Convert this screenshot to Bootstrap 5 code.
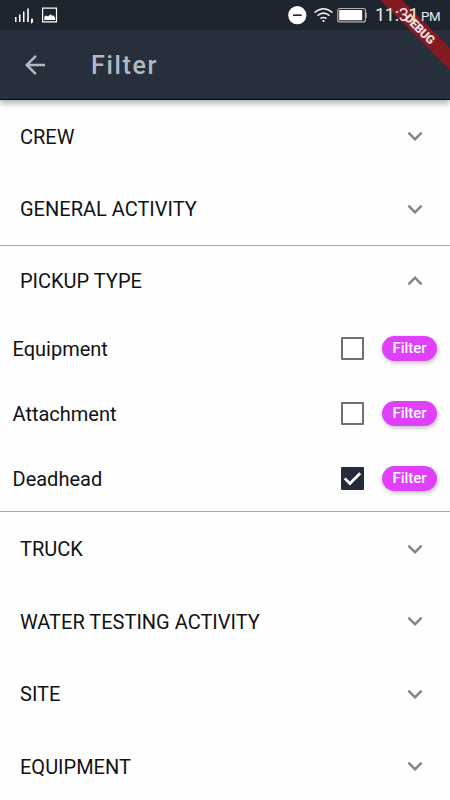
<!DOCTYPE html>
<html lang="en">
<head>
<meta charset="utf-8">
<meta name="viewport" content="width=device-width, initial-scale=1">
<title>Filter</title>
<link href="https://cdn.jsdelivr.net/npm/bootstrap@5.3.0/dist/css/bootstrap.min.css" rel="stylesheet">
<style>
body{font-family:Roboto,"Liberation Sans",sans-serif;background:#fefefe;color:#111214;width:450px;height:800px}
svg{display:block;flex:none}
.status{height:30px;background:#1e252e;color:#fff;padding:0 10px 0 14px}
.clock{z-index:3;width:65px;font-size:18px;line-height:30px;letter-spacing:-.3px;color:#e9eaeb;padding-top:2px}
.clock span{font-size:13.3px;letter-spacing:-.5px}
.appbar{height:70px;background:#262f3b;border-bottom:1px solid #05080b;box-shadow:0 4px 5px rgba(0,0,0,.26);padding-left:20px;color:#b4b8bf}
.title{font-size:25px;font-weight:500;letter-spacing:1.65px;margin-left:41px;line-height:30px;padding-top:3px}
.group-row{height:72.5px;padding:1px 20px 0;font-size:20px;line-height:24px}
.group-row svg{margin-top:-1px}
.open-group{border-top:1px solid #aaa;border-bottom:1px solid #aaa;height:267px;margin-bottom:.5px}
.open-group .group-row{height:70px;padding-top:0}
.option{height:65px;padding:0 13px 0 12.5px;font-size:20px;line-height:24px}
.check-box{appearance:none;width:23px;height:23px;border:2.5px solid #707070;margin:0 18px 0 0;border-radius:1px;background:#fff center/23px 23px no-repeat}
.check-box:checked{border-color:#232d3a;background-color:#232d3a;background-image:url("data:image/svg+xml,%3Csvg xmlns='http://www.w3.org/2000/svg' viewBox='0 0 23 23'%3E%3Cpath d='M3.7 11.4l5.2 5.1L19.2 6.2' fill='none' stroke='white' stroke-width='2.7'/%3E%3C/svg%3E")}
.pill{width:55px;height:25px;padding:0;border:0;background:#e040fb;color:#fff;font-size:15px;font-weight:500;line-height:25px;letter-spacing:0;box-shadow:1px 2px 4px rgba(0,0,0,.25)}
.ribbon{z-index:2}
</style>
<script src="https://cdn.jsdelivr.net/npm/bootstrap@5.3.0/dist/js/bootstrap.bundle.min.js"></script>
</head>
<body class="overflow-hidden position-relative">
<div class="status d-flex align-items-center justify-content-between">
  <svg width="44" height="30" fill="#fff"><path d="M1 17h1.500v5H1zM5 14.500h1.500V22H5zM9 11.500h1.500V22H9zM13.200 8.500h1.600V22h-1.600zM17 18.800h2V22l-1.200 1.600-.8-.2z"/><path fill="none" stroke="#fff" stroke-width="1.200" d="M28.600 8.100h13.900v13.800H28.600z"/><path d="M30.300 20v-3.300l1.800-1.200 2 1 2.200-2.300 1.700 1.500 1.300-.4 1.800 2.200V20z"/></svg>
  <div class="d-flex align-items-center">
    <svg width="88" height="30"><circle cx="10.300" cy="15.200" r="9.100" fill="#fff"/><path d="M6 15.200h8.700" stroke="#1e252e" stroke-width="1.600"/><g fill="none" stroke="#f1f1f1" stroke-width="1.500"><path d="M27.500 12.500q9-7.500 18 0M30.500 15.600q6-5 12 0M33.500 18.600q3-2.400 6 0"/></g><circle cx="36.500" cy="21" r="1.100" fill="#fff"/><rect x="50.800" y="8.500" width="27.600" height="13.400" rx="2" fill="none" stroke="#aeb2b6" stroke-width="1.200"/><rect x="52.200" y="10" width="23" height="10.300" rx=".6" fill="#fff"/><path d="M79.300 12.500v5.500" stroke="#aeb2b6"/></svg>
    <div class="clock d-flex align-items-baseline justify-content-between position-relative text-nowrap">11:31<span>PM</span></div>
  </div>
</div>
<header class="appbar d-flex align-items-center">
  <svg width="30" height="30" viewBox="0 0 24 24" fill="currentColor"><path d="M20 11H7.830l5.590-5.590L12 4l-8 8 8 8 1.410-1.410L7.830 13H20v-2z"/></svg>
  <h1 class="title mb-0">Filter</h1>
</header>
<svg class="ribbon position-absolute top-0 end-0" width="80" height="80"><path d="M10 0h22l48 48v22z" fill="#851b20"/><text transform="translate(50 29) rotate(45)" text-anchor="middle" y="4.300" font-size="12" font-weight="900" fill="#e8e3e4" textLength="37">DEBUG</text></svg>
<main>
  <div class="group-row d-flex align-items-center justify-content-between">CREW<svg width="30" height="30" viewBox="0 0 24 24" fill="#858585"><path d="M16.590 8.590L12 13.170 7.410 8.590 6 10l6 6 6-6z"/></svg></div>
  <div class="group-row d-flex align-items-center justify-content-between">GENERAL ACTIVITY<svg width="30" height="30" viewBox="0 0 24 24" fill="#858585"><path d="M16.590 8.590L12 13.170 7.410 8.590 6 10l6 6 6-6z"/></svg></div>
  <section class="open-group">
    <div class="group-row d-flex align-items-center justify-content-between">PICKUP TYPE<svg width="30" height="30" viewBox="0 0 24 24" fill="#858585"><path d="M12 8l-6 6 1.410 1.410L12 10.830l4.590 4.580L18 14z"/></svg></div>
    <div class="option d-flex align-items-center"><label class="me-auto" for="equipment">Equipment</label><input id="equipment" class="check-box" type="checkbox"><button class="btn pill rounded-pill">Filter</button></div>
    <div class="option d-flex align-items-center"><label class="me-auto" for="attachment">Attachment</label><input id="attachment" class="check-box" type="checkbox"><button class="btn pill rounded-pill">Filter</button></div>
    <div class="option d-flex align-items-center"><label class="me-auto" for="deadhead">Deadhead</label><input id="deadhead" class="check-box" type="checkbox" checked><button class="btn pill rounded-pill">Filter</button></div>
  </section>
  <div class="group-row d-flex align-items-center justify-content-between">TRUCK<svg width="30" height="30" viewBox="0 0 24 24" fill="#858585"><path d="M16.590 8.590L12 13.170 7.410 8.590 6 10l6 6 6-6z"/></svg></div>
  <div class="group-row d-flex align-items-center justify-content-between">WATER TESTING ACTIVITY<svg width="30" height="30" viewBox="0 0 24 24" fill="#858585"><path d="M16.590 8.590L12 13.170 7.410 8.590 6 10l6 6 6-6z"/></svg></div>
  <div class="group-row d-flex align-items-center justify-content-between">SITE<svg width="30" height="30" viewBox="0 0 24 24" fill="#858585"><path d="M16.590 8.590L12 13.170 7.410 8.590 6 10l6 6 6-6z"/></svg></div>
  <div class="group-row d-flex align-items-center justify-content-between">EQUIPMENT<svg width="30" height="30" viewBox="0 0 24 24" fill="#858585"><path d="M16.590 8.590L12 13.170 7.410 8.590 6 10l6 6 6-6z"/></svg></div>
</main>
</body>
</html>
